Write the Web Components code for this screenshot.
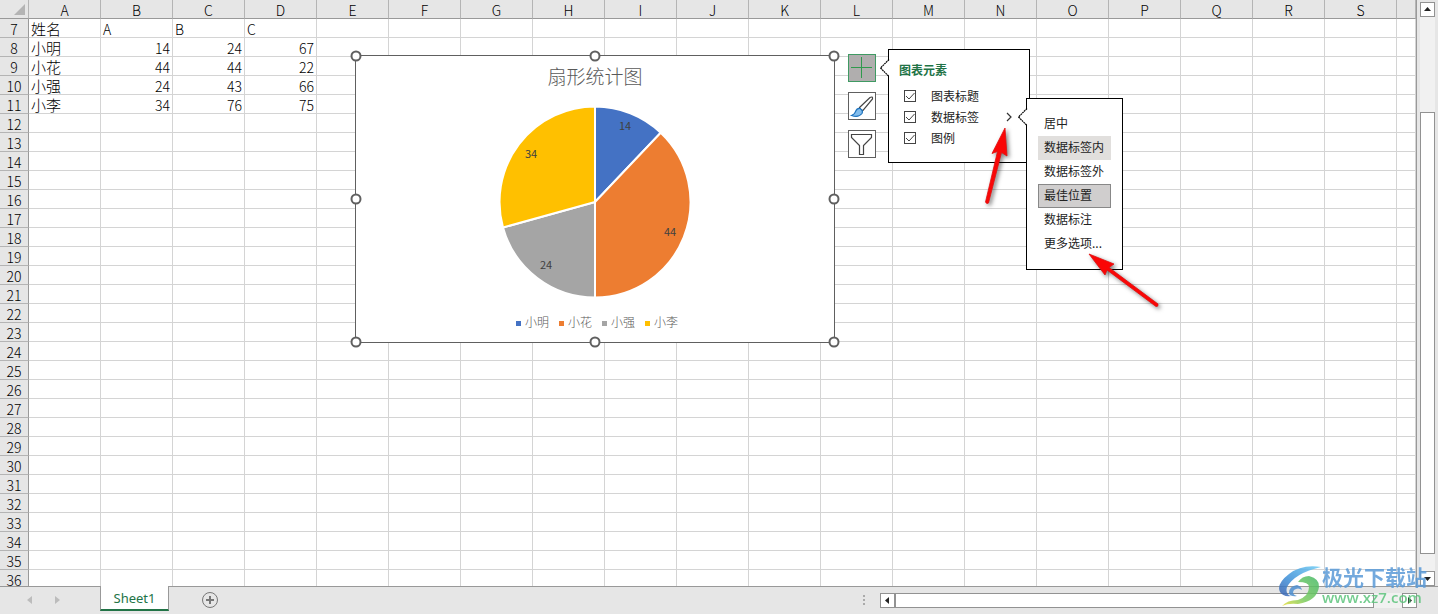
<!DOCTYPE html>
<html lang="zh-CN">
<head>
<meta charset="utf-8">
<title>Sheet1</title>
<style>
  html, body { margin: 0; height: 100%; }
  body { font-family: "Noto Sans CJK SC", "Liberation Sans", sans-serif; background: #e6e6e6; color: #222; overflow: hidden; }
</style>
</head>
<body>
<spreadsheet-app></spreadsheet-app>
<script>
const define = (name, html, setup) => {
  const tpl = document.createElement('template');
  tpl.innerHTML = html;
  customElements.define(name, class extends HTMLElement {
    constructor() {
      super();
      this.attachShadow({ mode: 'open' }).append(tpl.content.cloneNode(true));
    }
    connectedCallback() { if (setup) setup(this.shadowRoot, this); }
  });
};

/* Cell grid with column and row headings */
define('sheet-grid', `
<style>
  :host { display: block; }
  table { width: 100%; table-layout: fixed; border-spacing: 0; font-size: 14px; font-weight: 300; line-height: 16px; color: #000; }
  col.head { width: 29px; }
  col.data { width: 72px; }
  th, td { height: 16px; padding: 2px 0 0; box-sizing: content-box; border-right: 1px solid #d4d4d4; border-bottom: 1px solid #d4d4d4; white-space: nowrap; }
  td { background: #fff; padding: 2px 2px 0; text-align: right; }
  td.text { text-align: left; }
  td.name { font-size: 15px; text-align: left; }
  th { background: #e6e6e6; font-weight: 300; text-align: center; }
  thead th { border-bottom-color: #999; border-right-color: #b4b4b4; }
  tbody th { border-right-color: #999; border-bottom-color: #b4b4b4; }
  .corner svg { display: block; margin-left: auto; margin-right: 3px; }
</style>
<table><colgroup></colgroup><thead><tr></tr></thead><tbody></tbody></table>`,
root => {
  const letters = [...'ABCDEFGHIJKLMNOPQRS'];
  const data = {
    7: ['姓名', 'A', 'B', 'C'], 8: ['小明', 14, 24, 67], 9: ['小花', 44, 44, 22],
    10: ['小强', 24, 43, 66], 11: ['小李', 34, 76, 75]
  };
  root.querySelector('colgroup').innerHTML = '<col class="head">' + '<col class="data">'.repeat(19) + '<col>';
  root.querySelector('thead tr').innerHTML =
    '<th class="corner"><svg width="12" height="12" viewBox="0 0 12 12"><path d="M12 0V11H1Z" fill="#b4b4b4"/></svg></th>' +
    letters.map(l => `<th scope="col">${l}</th>`).join('') + '<th></th>';
  let rows = '';
  for (let r = 7; r <= 36; r++) {
    rows += `<tr><th scope="row">${r}</th>`;
    for (let c = 0; c < 20; c++) {
      const v = data[r]?.[c] ?? '';
      const cls = c === 0 ? 'name' : typeof v === 'string' ? 'text' : '';
      rows += `<td class="${cls}">${v}</td>`;
    }
    rows += '</tr>';
  }
  root.querySelector('tbody').innerHTML = rows;
});

/* Selected chart object */
define('pie-chart', `
<style>
  :host { display: flex; flex-direction: column; align-items: center; box-sizing: border-box; width: 480px; height: 288px; padding-top: 6px; background: #fff; border: 1px solid #606060; color: #595959; }
  h2 { margin: 0; font-size: 19px; line-height: 28px; font-weight: 300; }
  .pie { display: block; margin-top: 16px; }
  .pie text { font-size: 11px; fill: #404040; text-anchor: middle; }
  ul { display: flex; gap: 10px; margin: 15px 0 0 4px; padding: 0; list-style: none; font-size: 12px; font-weight: 300; line-height: 18px; }
  li { display: flex; align-items: center; gap: 4px; }
  li::before { content: ""; width: 5px; height: 5px; background: var(--c); margin-top: 2px; }
  .handles i { position: absolute; width: 7px; height: 7px; border: 2px solid #606060; border-radius: 50%; background: #fff; transform: translate(-50%, -50%); }
</style>
<h2>扇形统计图</h2>
<svg class="pie" width="192" height="192" viewBox="-96 -96 192 192">
  <g stroke="#fff" stroke-width="2" stroke-linejoin="round">
    <path d="M0 0V-95.500A95.500 95.500 0 0 1 65.700-69.300Z" fill="#4472c4"/>
    <path d="M0 0L65.700-69.300A95.500 95.500 0 0 1 0 95.500Z" fill="#ed7d31"/>
    <path d="M0 0V95.500A95.500 95.500 0 0 1-92 25.500Z" fill="#a5a5a5"/>
    <path d="M0 0L-92 25.500A95.500 95.500 0 0 1 0-95.500Z" fill="#ffc000"/>
  </g>
  <text x="30" y="-72">14</text><text x="75" y="34">44</text>
  <text x="-49" y="67">24</text><text x="-64" y="-44">34</text>
</svg>
<ul>
  <li style="--c:#4472c4">小明</li><li style="--c:#ed7d31">小花</li>
  <li style="--c:#a5a5a5">小强</li><li style="--c:#ffc000">小李</li>
</ul>
<div class="handles">
  <i style="left:0;top:0"></i><i style="left:50%;top:0"></i><i style="left:100%;top:0"></i>
  <i style="left:0;top:50%"></i><i style="left:100%;top:50%"></i>
  <i style="left:0;top:100%"></i><i style="left:50%;top:100%"></i><i style="left:100%;top:100%"></i>
</div>`);

/* Buttons shown beside a selected chart */
define('chart-tools', `
<style>
  :host { display: flex; flex-direction: column; gap: 10px; }
  button { width: 28px; height: 28px; padding: 0; border: 1px solid #606060; background: #fff; display: block; }
  button.on { background: #b0aeae; border-color: #3f9a63; }
  svg { display: block; }
</style>
<button class="on" aria-label="图表元素"><svg width="26" height="26" viewBox="0 0 26 26"><path d="M12.500 2V23M2 12.500H23" stroke="#2f9a4c" fill="none"/></svg></button>
<button aria-label="图表样式"><svg width="26" height="26" viewBox="0 0 26 26"><path d="M10.500 14.500L21 4.500Q24 3 23.500 6L14 17.500Q11.500 17.500 10.500 14.500Z" fill="#fff" stroke="#444" stroke-width="1.200"/><path d="M2.500 22.500Q6 21 6.500 18.500Q8 15 11 15.500Q14.500 17.500 13 20.500Q9.500 25 2.500 22.500Z" fill="#83bdec" stroke="#1e73be" stroke-width="1.200"/></svg></button>
<button aria-label="图表筛选器"><svg width="26" height="26" viewBox="0 0 26 26"><path d="M2.500 3.500H22.500V6.500L14.500 14.500V23.500H10.500V14.500L2.500 6.500Z" fill="#fff" stroke="#444" stroke-width="1.200"/></svg></button>`);

/* White callout box whose beak points left */
define('callout-box', `
<style>
  :host { display: block; box-sizing: border-box; background: #fff; border: 1px solid #000; }
  svg { position: absolute; left: -9px; top: 9px; }
</style>
<svg width="10" height="18" viewBox="0 0 10 18"><path d="M10 0L1 9L10 18Z" fill="#fff"/><path d="M9 .5L.5 9L9 17.500" fill="none" stroke="#000" stroke-width="1.200" stroke-dasharray="1.800 .6"/></svg>
<slot></slot>`);

define('chart-elements', `
<style>
  :host { display: block; width: 142px; }
  callout-box { height: 114px; padding: 10px; position: relative; }
  h3 { margin: 0 0 5px; font-size: 12px; line-height: 20px; color: #217346; }
  label { display: flex; align-items: center; height: 21px; padding-left: 5px; font-size: 12px; line-height: 19px; color: #222; }
  input { appearance: none; box-sizing: border-box; width: 12px; height: 12px; margin: 0 15px 0 0; border: 1px solid #444; background: #fff; }
  input:checked { background: url("data:image/svg+xml,%3Csvg xmlns='http://www.w3.org/2000/svg' viewBox='0 0 10 10'%3E%3Cpath d='M1 5L4 8L9.500 2' fill='none' stroke='%23444'/%3E%3C/svg%3E"); }
  .more { margin-left: auto; margin-right: 7px; }
</style>
<callout-box>
  <h3>图表元素</h3>
  <label><input type="checkbox" checked>图表标题</label>
  <label><input type="checkbox" checked>数据标签<svg class="more" width="6" height="10" viewBox="0 0 6 10"><path d="M1 1L5 5L1 9" fill="none" stroke="#333" stroke-width="1.200"/></svg></label>
  <label><input type="checkbox" checked>图例</label>
</callout-box>`);

define('label-menu', `
<style>
  :host { display: block; width: 97px; }
  callout-box { height: 172px; padding: 13px 11px; position: relative; }
  button { display: block; width: 73px; height: 24px; padding: 0 0 2px 5px; border: 1px solid transparent; background: none; font: 12px/20px "Noto Sans CJK SC", sans-serif; color: #222; text-align: left; white-space: nowrap; }
  .hover { background: #e1dfdd; }
  .current { background: #d0cece; border-color: #888; }
</style>
<callout-box>
  <button>居中</button><button class="hover">数据标签内</button><button>数据标签外</button>
  <button class="current">最佳位置</button><button>数据标注</button><button>更多选项...</button>
</callout-box>`);

/* Red pointer arrows drawn over the sheet */
define('red-arrows', `
<style>
  :host { display: block; pointer-events: none; }
  svg { display: block; filter: drop-shadow(2px 2px 2px rgba(0,0,0,.5)); }
</style>
<svg width="200" height="200" viewBox="975 120 200 200" fill="#fa0606" stroke="#e01010" stroke-width=".8" stroke-linejoin="round">
  <path d="M1005 128L1007 156L1001.500 152.500L988.500 203Q986.500 204.500 985.500 202L997.500 151.500L992 153.500Z"/>
  <path d="M1089 254L1114 264L1109 267.500L1158 304Q1158.500 307 1156 306.500L1107 270L1105 275Z"/>
</svg>`);

define('scroll-bar', `
<style>
  :host { display: flex; box-sizing: border-box; background: #f1f1f1; }
  :host([vertical]) { flex-direction: column; }
  button { flex: none; box-sizing: border-box; width: 15px; height: 15px; padding: 0; border: 1px solid #929292; background: #fff; }
  svg { display: block; }
  .before { flex: var(--before) 1 0; }
  .thumb { flex: var(--thumb) 1 0; background: #fff; border: 1px solid #929292; }
  .after { flex: var(--after) 1 0; }
  .back svg { transform: rotate(var(--turn)); }
  .next svg { transform: rotate(calc(var(--turn) + 180deg)); }
</style>
<button class="back" aria-label="后退"><svg width="13" height="13"><path d="M4 6.500L8 3V10Z" fill="#222"/></svg></button>
<div class="before"></div><div class="thumb"></div><div class="after"></div>
<button class="next" aria-label="前进"><svg width="13" height="13"><path d="M4 6.500L8 3V10Z" fill="#222"/></svg></button>`);

define('sheet-tabs', `
<style>
  :host { display: flex; align-items: flex-start; height: 27px; }
  button { padding: 0; border: 0; background: none; }
  nav { display: flex; width: 100px; height: 25px; gap: 14px; padding-left: 22px; box-sizing: border-box; }
  nav button { width: 14px; height: 25px; }
  svg { display: block; margin: auto; }
  .tab { box-sizing: border-box; width: 69px; height: 25px; margin-top: -1px; padding-top: 1px; border: 1px solid #999; border-top: 0; border-bottom: 2px solid #217346; background: #fff; color: #217346; font: 13px/22px "Noto Sans", sans-serif; text-align: center; }
  .add { margin: 4px 0 0 32px; }
  .grip { margin: 8px 15px 0 auto; }
</style>
<nav><button aria-label="上一个"><svg width="5" height="8"><path d="M5 0V8L0 4Z" fill="#bcbcbc"/></svg></button><button aria-label="下一个"><svg width="5" height="8"><path d="M0 0V8L5 4Z" fill="#bcbcbc"/></svg></button></nav>
<button class="tab">Sheet1</button>
<button class="add" aria-label="新工作表"><svg width="18" height="18"><circle cx="9" cy="9" r="7.500" fill="none" stroke="#777"/><path d="M9 5V13M5 9H13" stroke="#777" stroke-width="2"/></svg></button>
<svg class="grip" width="2" height="10" fill="#aaa"><path d="M0 0h2v2H0zM0 4h2v2H0zM0 8h2v2H0z"/></svg>`);

define('site-mark', `
<style>
  :host { display: flex; align-items: center; gap: 1px; pointer-events: none; opacity: .85; }
  svg { display: block; }
  p { margin: 0; white-space: nowrap; }
  .cn { font-size: 21px; line-height: 24px; font-weight: 700; color: #5b9bd8; }
  .url { font: 600 15px/19px "Open Sans", sans-serif; color: #5cc47c; }
</style>
<svg width="43" height="42" viewBox="0 0 43 42">
  <defs>
    <linearGradient id="a" x1="1" y1="0" x2="0" y2="1"><stop offset="0" stop-color="#6fcdf5"/><stop offset=".6" stop-color="#3d8fd8"/><stop offset="1" stop-color="#3a5fae"/></linearGradient>
    <linearGradient id="b" x1="1" y1="0" x2="0" y2="1"><stop offset="0" stop-color="#45b968"/><stop offset=".6" stop-color="#7acb5f"/><stop offset="1" stop-color="#ecdf3c"/></linearGradient>
  </defs>
  <path d="M43 2Q24-1 11 9Q-2 19 2 27Q5 32 13 31Q7 29 9 22Q17 8 43 2Z" fill="url(#a)"/>
  <path d="M11 28Q11 21 19 20Q23 21 24 25Q20 22 16 25Q13 29 19 31Q12 32 11 28Z" fill="#4d8fd0"/>
  <path d="M31 11Q42 14 41 22Q39 36 20 39Q10 38 4 41Q9 35 20 35Q31 31 31 22Q31 17 20 17Q24 11 31 11Z" fill="url(#b)"/>
</svg>
<div><p class="cn">极光下载站</p><p class="url">www.xz7.com</p></div>`);

define('spreadsheet-app', `
<style>
  :host { display: flex; flex-direction: column; height: 100vh; position: relative; overflow: hidden; }
  main { flex: 1; min-height: 0; display: flex; }
  .sheet { flex: 1; min-width: 0; position: relative; overflow: hidden; border-right: 1px solid #999; }
  .v { flex: none; width: 15px; margin: 2px 3px 0; --before: 95; --thumb: 441; --after: 17; --turn: 90deg; }
  footer { flex: none; display: flex; height: 27px; border-top: 1px solid #999; }
  sheet-tabs { flex: 880 1 0; }
  .right { flex: 537 1 0; padding: 6px 21px 0 0; }
  .h { height: 15px; --before: 0; --thumb: 478; --after: 28; --turn: 0deg; }
  pie-chart { position: absolute; left: 355px; top: 55px; }
  chart-tools { position: absolute; left: 848px; top: 54px; }
  chart-elements { position: absolute; left: 888px; top: 49px; }
  label-menu { position: absolute; left: 1026px; top: 98px; }
  red-arrows { position: absolute; left: 975px; top: 120px; }
  site-mark { position: absolute; right: 11px; bottom: 7px; }
</style>
<main>
  <div class="sheet">
    <sheet-grid></sheet-grid>
    <pie-chart></pie-chart>
    <chart-tools></chart-tools>
    <chart-elements></chart-elements>
    <label-menu></label-menu>
    <red-arrows></red-arrows>
  </div>
  <scroll-bar class="v" vertical></scroll-bar>
</main>
<footer>
  <sheet-tabs></sheet-tabs>
  <div class="right"><scroll-bar class="h"></scroll-bar></div>
</footer>
<site-mark></site-mark>`);
</script>
</body>
</html>
